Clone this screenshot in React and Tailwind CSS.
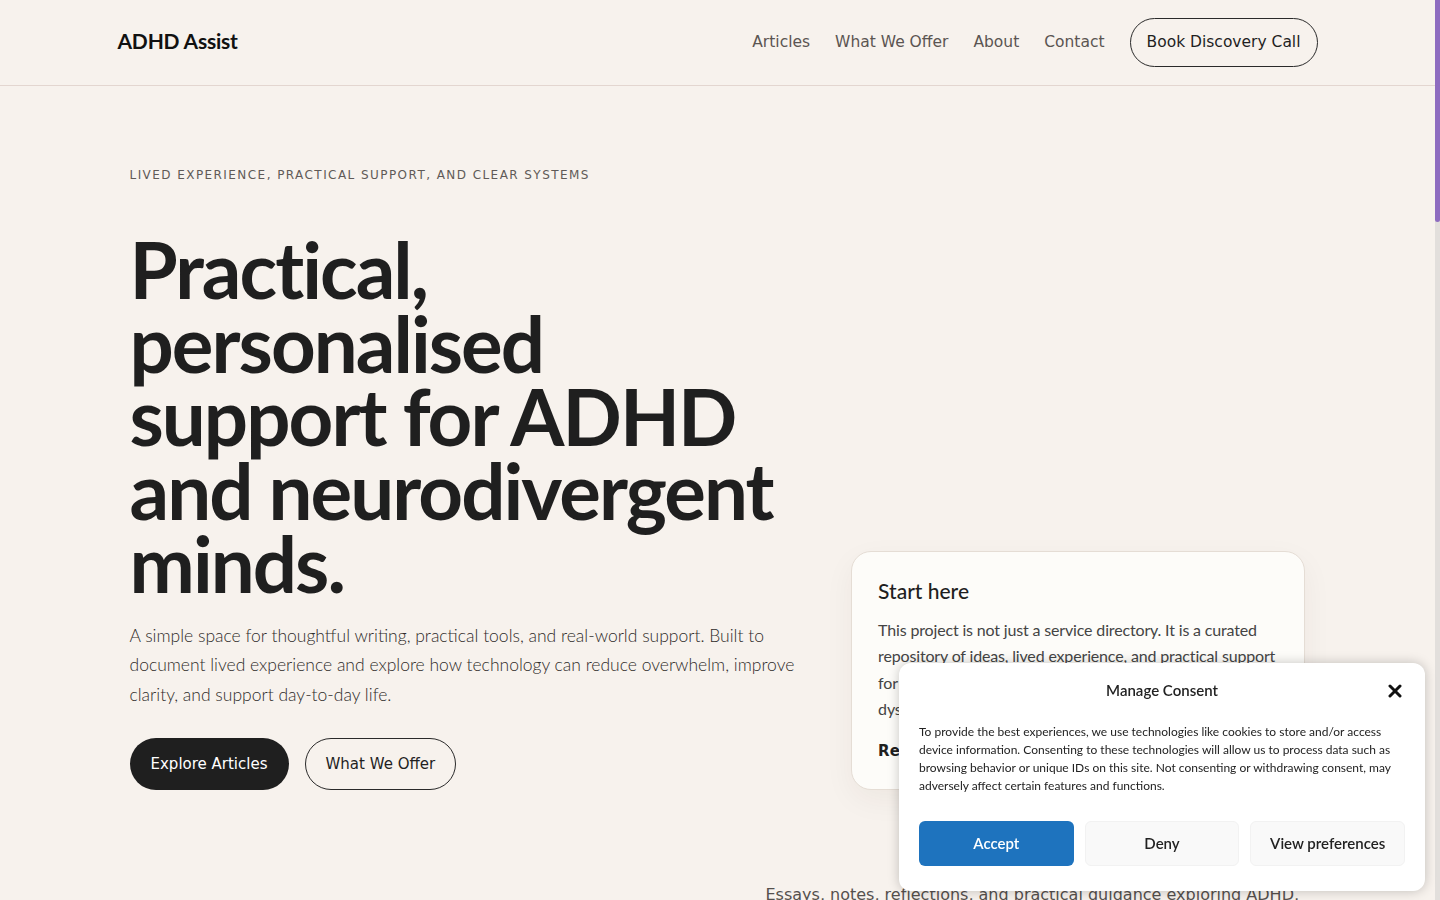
import React from 'react';
import { X } from 'lucide-react';

const sans = { fontFamily: '"DejaVu Sans", sans-serif' };

const Header = () => (
  <header className="border-b border-[#e3d6d0]">
    <div className="mx-auto flex h-[85px] max-w-[1200px] items-center justify-between">
      <a className="-mt-[3px] text-[21px] font-bold tracking-[-0.01em] text-[#111] font-['Lato',sans-serif]">
        ADHD Assist
      </a>
      <nav className="flex items-center gap-[25px] font-['DejaVu_Sans',sans-serif] text-[15.5px] text-[#5b5552]">
        <a>Articles</a>
        <a>What We Offer</a>
        <a>About</a>
        <a>Contact</a>
        <a className="flex h-[49px] items-center rounded-full border border-[#2a2a2a] px-4 text-[#1f1f1f]">
          Book Discovery Call
        </a>
      </nav>
    </div>
  </header>
);

const Hero = () => (
  <section className="mx-auto max-w-[1200px] px-3 pt-[80px]">
    <p className="font-['DejaVu_Sans',sans-serif] text-[12px] uppercase tracking-[0.12em] text-[#5f5a57]">
      Lived experience, practical support, and clear systems
    </p>
    <div className="grid grid-cols-[1.5fr_1fr] items-end gap-10">
      <div>
        <h1 className="mt-[49px] font-['Lato',sans-serif] text-[78px] font-bold leading-[73.5px] tracking-[-0.025em] text-[#1f1f1f]">
          Practical,
          <br />
          personalised
          <br />
          support for ADHD
          <br />
          and neurodivergent
          <br />
          minds.
        </h1>
        <p className="mt-[20px] font-['Lato',sans-serif] text-[17.5px] font-light leading-[29.5px] text-[#2f2c2a]">
          A simple space for thoughtful writing, practical tools, and real-world support. Built to
          document lived experience and explore how technology can reduce overwhelm, improve
          clarity, and support day-to-day life.
        </p>
        <div className="mt-[29px] flex gap-[16px] font-['DejaVu_Sans',sans-serif] text-[15px]">
          <a className="flex h-[52px] items-center rounded-full bg-[#1f1f1f] px-[21px] text-white">
            Explore Articles
          </a>
          <a className="flex h-[52px] items-center rounded-full border border-[#2a2a2a] px-[20px] text-[#1f1f1f]">
            What We Offer
          </a>
        </div>
      </div>
      <div className="rounded-[20px] border border-[#e5ddd5] bg-[#fdfcf9] px-[26px] pb-[27px] pt-[23px] shadow-[0_10px_30px_rgba(60,40,20,0.05)]">
        <h2 className="font-['Lato',sans-serif] text-[21px] font-medium text-[#1f1f1f]">Start here</h2>
        <p className="mt-[10px] font-['Lato',sans-serif] text-[16px] leading-[26.5px] tracking-[-0.01em] text-[#444]">
          This project is not just a service directory. It is a curated repository of ideas, lived
          experience, and practical support for neurodivergent adults, including people with
          dyspraxia, dyslexia, and ADHD.
        </p>
        <a className="mt-[17px] block font-['DejaVu_Sans',sans-serif] text-[15px] font-bold text-[#1f1f1f]">
          Read the articles →
        </a>
      </div>
    </div>
  </section>
);

const Articles = () => (
  <section className="mx-auto max-w-[1200px] px-3 pb-24 pt-[92px]">
    <div className="grid grid-cols-[588px_1fr] items-end gap-12">
      <h2 className="font-['Lato',sans-serif] text-[48px] font-bold leading-tight text-[#1f1f1f]">
        Latest articles
      </h2>
      <p className="text-[16px] leading-[26px] text-[#55504d]" style={sans}>
        Essays, notes, reflections, and practical guidance exploring ADHD,
        neurodivergence, systems thinking, and the tools that make daily life a little
        easier to manage.
      </p>
    </div>
    <div className="mt-12 grid grid-cols-3 gap-6">
      {['Working with time blindness', 'Building a calmer inbox', 'When routines break down'].map((t) => (
        <div key={t} className="h-[260px] rounded-[20px] border border-[#e5ddd5] bg-[#fdfcf9] p-6">
          <h3 className="font-['Lato',sans-serif] text-[21px] font-medium text-[#1f1f1f]">{t}</h3>
        </div>
      ))}
    </div>
  </section>
);

const ConsentBanner = () => (
  <div className="fixed left-[899px] top-[663px] w-[526px] rounded-[12px] bg-white px-5 pb-[25px] pt-[16px] font-['Lato',sans-serif] shadow-[0_0_12px_rgba(0,0,0,0.22)]">
    <div className="relative flex items-center justify-center">
      <span className="text-[15px] font-semibold text-[#222]">Manage Consent</span>
      <button className="absolute right-0 top-[2px] text-[#111]">
        <X size={20} strokeWidth={3.6} />
      </button>
    </div>
    <p className="mt-[21px] text-[12px] leading-[18px] text-[#222]">
      To provide the best experiences, we use technologies like cookies to store and/or access
      device information. Consenting to these technologies will allow us to process data such as
      browsing behavior or unique IDs on this site. Not consenting or withdrawing consent, may
      adversely affect certain features and functions.
    </p>
    <div className="mt-[26px] grid grid-cols-3 gap-[11px] text-[15px] font-semibold">
      <button className="h-[45px] rounded-[6px] bg-[#1e73be] text-white">Accept</button>
      <button className="h-[45px] rounded-[6px] border border-[#f2f2f2] bg-[#f9f9f9] text-[#222]">Deny</button>
      <button className="h-[45px] rounded-[6px] border border-[#f2f2f2] bg-[#f9f9f9] text-[#222]">View preferences</button>
    </div>
  </div>
);

export default function App() {
  return (
    <div className="flex h-screen bg-[#f7f2ed]">
      <main className="min-w-0 flex-1 overflow-hidden">
        <Header />
        <Hero />
        <Articles />
      </main>
      {/* page scrollbar */}
      <div className="w-[5px] shrink-0 bg-[#e2dfdc]">
        <div className="h-[222px] rounded-b-[3px] bg-[#8e6cc0]" />
      </div>
      <ConsentBanner />
    </div>
  );
}
